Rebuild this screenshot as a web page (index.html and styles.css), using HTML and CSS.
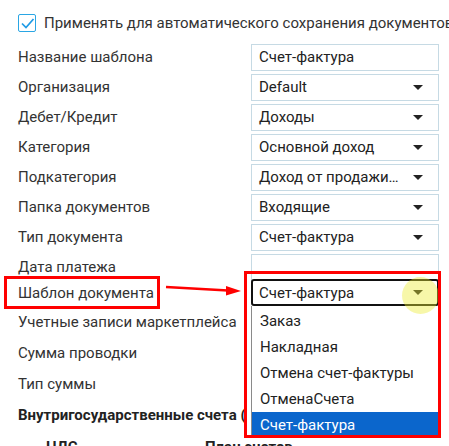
FILE: index.html
```html
<!DOCTYPE html>
<html lang="ru">
<head>
<meta charset="utf-8">
<link rel="stylesheet" href="styles.css">
</head>
<body>
<div class="page">
  <div class="check-row">
    <span class="checkbox"><svg width="15" height="15" viewBox="0 0 15 15"><path d="M2 7.5 L6 11.5 L13.5 3" fill="none" stroke="#1e9be6" stroke-width="1.7"/></svg></span>
    <span class="check-label">Применять для автоматического сохранения документов</span>
  </div>
  <div class="form">
    <div class="row"><div class="label">Название шаблона</div><div class="field">Счет-фактура</div></div>
    <div class="row"><div class="label">Организация</div><div class="field">Default<i class="caret"></i></div></div>
    <div class="row"><div class="label">Дебет/Кредит</div><div class="field">Доходы<i class="caret"></i></div></div>
    <div class="row"><div class="label">Категория</div><div class="field">Основной доход<i class="caret"></i></div></div>
    <div class="row"><div class="label">Подкатегория</div><div class="field">Доход от продажи…<i class="caret"></i></div></div>
    <div class="row"><div class="label">Папка документов</div><div class="field">Входящие<i class="caret"></i></div></div>
    <div class="row"><div class="label">Тип документа</div><div class="field">Счет-фактура<i class="caret"></i></div></div>
    <div class="row row-date"><div class="label">Дата платежа</div><div class="field"></div></div>
    <div class="row row-tpl">
      <div class="label">Шаблон документа</div>
      <div class="ctl">
        <div class="select-open">Счет-фактура<i class="caret"></i></div>
        <ul class="listbox">
          <li>Заказ</li>
          <li>Накладная</li>
          <li>Отмена счет-фактуры</li>
          <li>ОтменаСчета</li>
          <li class="active">Счет-фактура</li>
        </ul>
      </div>
    </div>
    <div class="row row-plain first"><div class="label">Учетные записи маркетплейса</div></div>
    <div class="row row-plain"><div class="label">Сумма проводки</div></div>
    <div class="row row-plain"><div class="label">Тип суммы</div></div>
    <div class="row row-plain"><div class="label bold clip">Внутригосударственные счета (по умолчанию)</div></div>
    <div class="thead"><span class="th1">НДС</span><span>План счетов</span></div>
  </div>

  <div class="hl-circle"></div>
  <div class="mark mark-select"></div>
  <div class="mark mark-label"></div>
  <svg class="arrow" width="90" height="20" viewBox="0 0 90 20">
    <line x1="6" y1="7" x2="68" y2="10.5" stroke="#f00" stroke-width="2.5"/>
    <polygon points="66,6 81,11 66,15.5" fill="#f00"/>
  </svg>
</div>
</body>
</html>
```
FILE: styles.css
```css
* { box-sizing: border-box; }
html, body { margin: 0; padding: 0; background: #fff; }
body {
  font-family: Roboto, "Noto Sans", sans-serif;
  font-size: 15px;
  color: #333;
  width: 449px;
  height: 446px;
  overflow: hidden;
}
.page {
  position: relative;
  padding: 14px 0 0 18px;
  height: 446px;
  overflow: hidden;
}
.check-row {
  display: flex;
  align-items: center;
  gap: 8px;
  height: 18px;
  white-space: nowrap;
}
.checkbox {
  width: 18px;
  height: 18px;
  flex: none;
  border: 1.5px solid #2aa6e4;
  border-radius: 2px;
  display: flex;
  align-items: center;
  justify-content: center;
}
.check-label { color: #333; }

.form {
  margin-top: 12px;
  display: flex;
  flex-direction: column;
}
.row {
  display: flex;
  height: 30px;
  flex: none;
}
.label {
  width: 233px;
  flex: none;
  line-height: 27px;
  white-space: nowrap;
}
.field {
  width: 188px;
  height: 27px;
  flex: none;
  border: 1px solid #c6dae4;
  padding-left: 7px;
  line-height: 25px;
  color: #222;
  display: flex;
  align-items: center;
  justify-content: space-between;
}
.caret {
  width: 0;
  height: 0;
  border-left: 5px solid transparent;
  border-right: 5px solid transparent;
  border-top: 5px solid #222;
  margin-right: 15px;
}
.row-date { height: 26px; }
.row-tpl { height: 26px; }
.row-tpl .label { line-height: 26px; }
.ctl { position: relative; width: 188px; flex: none; }
.select-open {
  margin-top: -1px;
  height: 27px;
  border: 2px solid #111;
  border-radius: 3px;
  padding-left: 6px;
  color: #222;
  display: flex;
  align-items: center;
  justify-content: space-between;
}
.select-open .caret { margin-right: 14px; }
.listbox {
  position: absolute;
  left: 0;
  top: 26px;
  width: 188px;
  margin: 0;
  padding: 2px 0 0 0;
  list-style: none;
  background: #fff;
  border-left: 1px solid #8a8a8a;
  border-right: 1px solid #8a8a8a;
  z-index: 2;
}
.listbox li {
  height: 26px;
  line-height: 26px;
  padding-left: 8px;
  color: #222;
  white-space: nowrap;
}
.listbox li.active { background: #0b66cc; color: #fff; }

.row-plain { height: 31px; }
.row-plain.first { margin-top: 1px; }
.row-plain .label { line-height: 31px; }
.bold { font-weight: 700; color: #222; }
.clip { width: 227px; overflow: hidden; }
.thead {
  margin-top: 6px;
  padding-left: 28px;
  display: flex;
  line-height: 20px;
  font-weight: 700;
  color: #222;
  white-space: nowrap;
}
.th1 { width: 159px; }

.hl-circle {
  position: absolute;
  left: 402px;
  top: 277px;
  width: 37px;
  height: 37px;
  border-radius: 50%;
  background: rgba(236, 236, 50, 0.42);
  z-index: 3;
}
.mark {
  position: absolute;
  border: 3px solid #f00;
  z-index: 4;
}
.mark-select { left: 244px; top: 271px; width: 197px; height: 167px; }
.mark-label { left: 4px; top: 276px; width: 156px; height: 33px; }
.arrow { position: absolute; left: 160px; top: 280px; z-index: 4; }
```
